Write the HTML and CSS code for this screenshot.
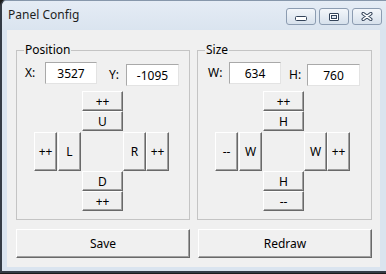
FILE: index.html
```html
<!DOCTYPE html>
<html lang="en">
<head>
    <meta charset="UTF-8">
    <meta name="viewport" content="width=device-width, initial-scale=1.0">
    <title>Panel Config</title>
    <link rel="stylesheet" href="styles.css">
</head>
<body>
    <div class="window">
        <!-- Title bar -->
        <div class="titlebar">
            <span class="title">Panel Config</span>
            <div class="caption">
                <div class="cap">
                    <svg class="glyph-min" width="12" height="5" viewBox="0 0 12 5">
                        <rect x="0.5" y="0.5" width="11" height="4" rx="1" fill="#fff" stroke="#34445a"/>
                    </svg>
                </div>
                <div class="cap">
                    <svg width="10" height="8" viewBox="0 0 10 8">
                        <rect x="0.5" y="0.5" width="9" height="7" rx="0.5" fill="#fff" stroke="#34445a"/>
                        <rect x="2.5" y="2.5" width="5" height="3" fill="#dfe7f0" stroke="#34445a"/>
                    </svg>
                </div>
                <div class="cap">
                    <svg width="12" height="9" viewBox="0 0 12 9">
                        <path d="M2.2 1.6 L9.8 7.4 M9.8 1.6 L2.2 7.4" stroke="#34445a" stroke-width="3.4" stroke-linecap="round"/>
                        <path d="M2.2 1.6 L9.8 7.4 M9.8 1.6 L2.2 7.4" stroke="#fff" stroke-width="1.5" stroke-linecap="round"/>
                    </svg>
                </div>
            </div>
        </div>

        <!-- Client area -->
        <div class="client">
            <div class="groups">
                <fieldset class="group group-pos">
                    <legend>Position</legend>
                    <div class="coords coords-pos">
                        <span class="lbl">X:</span>
                        <input class="field" type="text" value="3527">
                        <span></span>
                        <span class="lbl low">Y:</span>
                        <input class="field low" type="text" value="-1095">
                    </div>
                    <div class="pad">
                        <button class="btn a-up2">++</button>
                        <button class="btn a-up">U</button>
                        <button class="btn a-left2">++</button>
                        <button class="btn a-left">L</button>
                        <button class="btn a-right">R</button>
                        <button class="btn a-right2">++</button>
                        <button class="btn a-down">D</button>
                        <button class="btn a-down2">++</button>
                    </div>
                </fieldset>

                <fieldset class="group group-size">
                    <legend>Size</legend>
                    <div class="coords coords-size">
                        <span class="lbl">W:</span>
                        <input class="field" type="text" value="634">
                        <span></span>
                        <span class="lbl low">H:</span>
                        <input class="field low" type="text" value="760">
                    </div>
                    <div class="pad">
                        <button class="btn a-up2">++</button>
                        <button class="btn a-up">H</button>
                        <button class="btn a-left2">--</button>
                        <button class="btn a-left">W</button>
                        <button class="btn a-right">W</button>
                        <button class="btn a-right2">++</button>
                        <button class="btn a-down">H</button>
                        <button class="btn a-down2">--</button>
                    </div>
                </fieldset>
            </div>

            <div class="actions">
                <button class="btn big">Save</button>
                <button class="btn big">Redraw</button>
            </div>
        </div>
    </div>
</body>
</html>
```

FILE: styles.css
```css
* {
    box-sizing: border-box;
}
body {
    margin: 0;
    background-color: #1b1b1b;
    font-family: "Noto Sans", "Open Sans", sans-serif;
    font-size: 12px;
    color: #000;
}
.window {
    width: 386px;
    height: 273px;
    display: flex;
    flex-direction: column;
    background-color: #dae4ef;
    border-top: 1px solid #8797ab;
    border-left: 2px solid #343b45;
    border-bottom: 2px solid #343b45;
    border-top-left-radius: 6px;
}
.titlebar {
    height: 29px;
    display: flex;
    justify-content: space-between;
    align-items: flex-start;
    padding: 0 4px 0 6px;
    background: linear-gradient(#e5ecf5, #dae4ef);
    border-top-left-radius: 5px;
}
.title {
    margin-top: 6px;
    line-height: 16px;
    color: #1e1e1e;
}
.caption {
    display: flex;
    gap: 3px;
    margin-top: 7px;
}
.cap {
    width: 30px;
    height: 17px;
    display: flex;
    align-items: center;
    justify-content: center;
    border: 1px solid #8c9cb1;
    border-radius: 3px;
    background: linear-gradient(#f3f6fa, #d7e1ec);
}
.glyph-min {
    margin-top: 4px;
}
.client {
    flex: 1;
    margin: 0 6px 4px 5px;
    padding: 12px 8px 0 9px;
    background-color: #f0f0f0;
}
.groups {
    display: flex;
    gap: 7px;
}
.group {
    margin: 0;
    padding: 0;
    height: 178px;
    border: 1px solid #c4c4c4;
}
.group-pos {
    width: 174px;
}
.group-size {
    width: 175px;
}
legend {
    margin-left: 7px;
    padding: 0 1px;
    line-height: 16px;
}
.coords {
    display: grid;
    align-items: start;
    margin-top: 4px;
}
.coords-pos {
    padding-left: 8px;
    grid-template-columns: 20px 52px 12px 17px 53px;
}
.coords-size {
    padding-left: 10px;
    grid-template-columns: 21px 52px 8px 18px 53px;
}
.lbl {
    line-height: 21px;
}
.low {
    margin-top: 2px;
}
.field {
    width: 100%;
    height: 22px;
    padding: 0;
    font: inherit;
    text-align: center;
    background-color: #fff;
    border: 1px solid;
    border-color: #a9a9a9 #e3e3e3 #e3e3e3 #a9a9a9;
    outline: none;
}
.pad {
    display: grid;
    grid-template-columns: 24px 24px 41px 23px 23px;
    grid-template-rows: 20px 20px 40px 20px 20px;
    margin: 5px 0 0 17px;
}
.btn {
    padding: 0;
    font: inherit;
    color: #000;
    background-color: #f0f0f0;
    border: 1px solid;
    border-color: #fff #696969 #696969 #fff;
    box-shadow: inset -1px -1px #a0a0a0;
}
.a-up2 { grid-area: 1 / 3; }
.a-up { grid-area: 2 / 3; }
.a-left2 { grid-area: 3 / 1; margin: 1px 1px 0 0; }
.a-left { grid-area: 3 / 2; margin: 1px 1px 0 0; }
.a-right { grid-area: 3 / 4; margin-top: 1px; }
.a-right2 { grid-area: 3 / 5; margin-top: 1px; }
.a-down { grid-area: 4 / 3; }
.a-down2 { grid-area: 5 / 3; }
.actions {
    display: flex;
    gap: 8px;
    margin-top: 9px;
}
.big {
    width: 174px;
    height: 29px;
}
```
